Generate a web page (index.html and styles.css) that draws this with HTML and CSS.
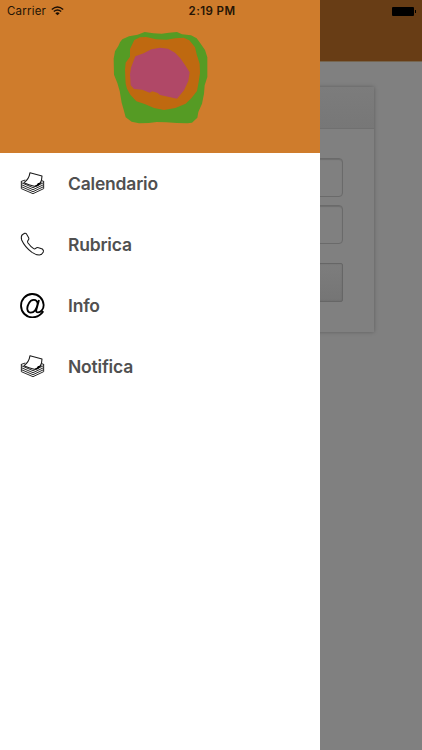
FILE: index.html
```
<!DOCTYPE html>
<html lang="it">
<head>
<meta charset="utf-8">
<title>Menu</title>
<link rel="stylesheet" href="styles.css">
</head>
<body>
<div class="screen">
  <div class="page">
    <div class="page-bar"></div>
    <div class="card">
      <div class="card-head"></div>
      <div class="card-body">
        <div class="field"></div>
        <div class="field"></div>
        <div class="button"></div>
      </div>
    </div>
  </div>

  <aside class="drawer">
    <div class="drawer-head">
      <svg class="logo" viewBox="0 0 330 330">
        <path fill="#559b24" d="M52 52 L72 43 98 38 119 30 145 34 170 35 192 32 216 30 231 37 258 40 275 49 285 62 300 84 307 106 307 165 299 190 297 215 291 245 280 270 277 287 261 302 247 304 216 303 184 301 155 300 131 303 102 304 80 299 62 286 56 263 50 242 44 207 37 183 27 158 26 110 30 88 40 72 45 61Z"/>
        <path fill="#bf6910" d="M88 54 L105 46 124 45 153 52 184 53 211 49 236 47 253 55 270 76 275 97 284 125 285 153 281 180 276 207 259 229 242 245 211 258 177 264 147 258 119 246 94 238 76 218 66 200 62 185 61 169 60 143 62 122 75 104 75 81Z"/>
        <path fill="#b04867" d="M91 103 L116 94 139 82 165 77 189 80 210 92 226 109 240 129 254 151 250 177 237 205 216 230 189 224 165 219 158 213 142 208 134 212 112 203 87 201 77 190 75 157 78 137Z"/>
      </svg>
    </div>
    <nav class="menu">
      <a class="item">
        <svg class="icon" viewBox="0 0 75 75"><use href="#stack"/></svg>
        <span>Calendario</span>
      </a>
      <a class="item">
        <svg class="icon" viewBox="0 0 75 75">
          <path class="line" d="M7 8 L14 4 Q18 3 20 7 L26 17 Q28 21 25 24 L23 27 Q22 30 24 33 Q32 44 41 50 Q44 52 47 49 Q51 45 56 47 L67 51 Q72 55 70 60 Q66 68 58 69 Q48 69 36 61 Q15 46 5 24 Q2 13 7 8Z"/>
        </svg>
        <span>Rubrica</span>
      </a>
      <a class="item">
        <svg class="icon" viewBox="0 0 75 75">
          <path class="at" d="M70 55 Q58 73 37 73 A34 35 0 1 1 71 36 C71 50 62 58 54 58 Q47 58 49 50 L57 21 M53 33 C51 16 33 18 26 32 C19 44 21 59 32 59 C42 59 50 48 53 33"/>
        </svg>
        <span>Info</span>
      </a>
      <a class="item">
        <svg class="icon" viewBox="0 0 75 75"><use href="#stack"/></svg>
        <span>Notifica</span>
      </a>
    </nav>
  </aside>

  <header class="status">
    <div class="carrier">
      <span>Carrier</span>
      <svg class="wifi" viewBox="0 0 24 18">
        <path d="M1.5 6.2 Q12 -3 22.5 6.2 M5.2 10 Q12 4 18.8 10"/>
        <path class="dot" d="M8 13 Q12 9.5 16 13 L12 17Z"/>
      </svg>
    </div>
    <span class="time">2:19 PM</span>
    <div class="battery"><i class="cell"></i><i class="tip"></i></div>
  </header>
</div>

<svg class="defs" width="0" height="0">
  <defs>
    <g id="stack">
      <g class="line sheets">
        <path d="M4 53 L39 68 71 53"/>
        <path d="M4 47 L39 62 71 47"/>
        <path d="M4 41 L39 56 71 41"/>
        <path d="M4 35 L39 50 71 35"/>
        <path d="M16 27 L4 31 M60 27 L71 31"/>
        <path d="M4 30 V53 M71 30 V53"/>
      </g>
      <path class="line paper" d="M30 5 L66 15 Q66 29 60 37 Q53 46 43 46 Q26 41 12 35 Q27 25 30 5Z"/>
      <path d="M43 46 Q52 42 54 36 Q59 38 68 29 Q57 47 43 46Z"/>
    </g>
  </defs>
</svg>
</body>
</html>
```
FILE: styles.css
```
* { box-sizing: border-box; }

body {
  margin: 0;
  font-family: Inter, "Liberation Sans", sans-serif;
}

.screen {
  position: relative;
  width: 422px;
  height: 750px;
  overflow: hidden;
  background: #808080;
}

.page-bar {
  height: 62px;
  background: #683d15;
  border-bottom: 1px solid #76654f;
}

.card {
  width: 326px;
  height: 245px;
  margin: 25px auto 0;
  background: #808080;
  box-shadow: 0 0 4px rgba(0, 0, 0, .28);
}

.card-head {
  height: 42px;
  background: linear-gradient(#7c7c7c, #777);
  border-bottom: 1px solid #707070;
}

.card-body {
  display: flex;
  flex-direction: column;
  padding: 29px 31px 0;
}

.field {
  height: 39px;
  margin-bottom: 8px;
  border: 1px solid #6a6a6a;
  border-radius: 4px;
  box-shadow: inset 0 1px 1px rgba(0, 0, 0, .15);
}

.button {
  height: 39px;
  margin-top: 11px;
  background: linear-gradient(#7d7d7d, #757575);
  border: 1px solid #666;
  border-radius: 2px;
  box-shadow: inset 0 0 2px rgba(0, 0, 0, .12);
}

.drawer {
  position: absolute;
  top: 0;
  left: 0;
  width: 320px;
  height: 750px;
  background: #fff;
}

.drawer-head {
  display: flex;
  justify-content: center;
  height: 153px;
  padding-top: 22px;
  background: #cf7c2c;
}

.logo {
  width: 110px;
  height: 110px;
}

.item {
  display: flex;
  align-items: center;
  gap: 23px;
  height: 61px;
  padding-left: 20px;
  color: #505050;
  font-size: 17.5px;
  font-weight: 600;
  letter-spacing: -.2px;
}

.icon {
  flex: none;
  width: 25px;
  height: 25px;
}

.line {
  fill: none;
  stroke: #1a1a1a;
  stroke-width: 3.2;
  stroke-linejoin: round;
}

.sheets { stroke-width: 2.8; }

.paper { fill: #fff; }

.at {
  fill: none;
  stroke: #000;
  stroke-width: 5.5;
  stroke-linejoin: round;
}

.status {
  position: absolute;
  top: 0;
  left: 0;
  display: grid;
  grid-template-columns: 1fr auto 1fr;
  align-items: center;
  width: 422px;
  height: 22px;
  padding: 0 6px 0 7px;
  color: #251405;
  font-size: 11.5px;
}

.carrier {
  display: flex;
  align-items: center;
  gap: 5px;
  letter-spacing: .2px;
}

.wifi {
  width: 13px;
  height: 10px;
  fill: none;
  stroke: #1c0f04;
  stroke-width: 2.6;
}

.dot {
  fill: #1c0f04;
  stroke: none;
}

.time {
  padding-left: 1px;
  font-weight: 600;
  letter-spacing: .4px;
}

.battery {
  display: flex;
  align-items: center;
  justify-content: flex-end;
  gap: 1px;
}

.cell {
  width: 22px;
  height: 9px;
  border-radius: 1px;
  background: #000;
}

.tip {
  width: 1px;
  height: 3px;
  background: #000;
}

.defs { position: absolute; }
```
